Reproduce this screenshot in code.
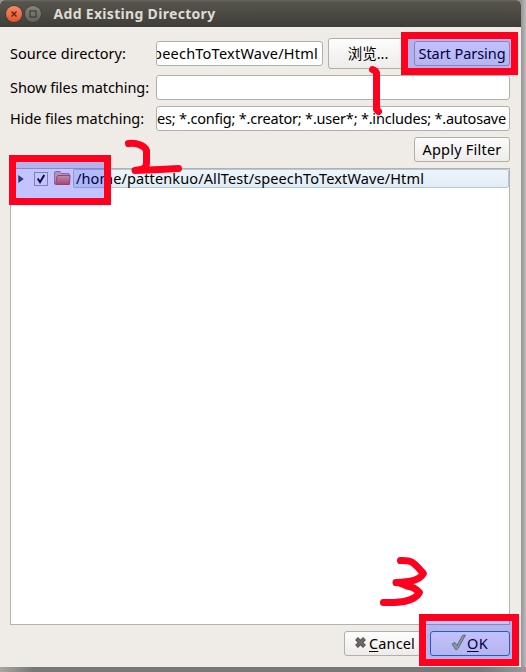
<script>
  // Spreads letters so that a label fills its measured width.
  function fit(node, width) {
    const n = node.textContent.length;
    node.style.letterSpacing = '0px';
    const natural = node.getBoundingClientRect().width;
    node.style.letterSpacing = (width - natural) / n + 'px';
  }
</script>

<div class="desktop">
  <div class="window">
    <header>
      <span class="ctl close"><svg width="16" height="16"><path d="M5.500 5.500l5 5m0-5l-5 5" stroke="#5b2412" stroke-width="1.3" /></svg></span>
      <span class="ctl max"><svg width="16" height="16"><rect x="5" y="5" width="6" height="6" fill="none" stroke="#403f3a" stroke-width="1.3" /></svg></span>
      <h1><span use:fit={162}>Add Existing Directory</span></h1>
    </header>

    <main>
      <div class="row first">
        <label for="src"><span use:fit={116}>Source directory:</span></label>
        <div class="field src" id="src"><span use:fit={165}>peechToTextWave/Html</span></div>
        <button class="browse"><span>浏览...</span></button>
        <button class="parse"><span use:fit={87}>Start Parsing</span></button>
      </div>
      <div class="row second">
        <label for="show"><span use:fit={139}>Show files matching:</span></label>
        <div class="field" id="show"></div>
      </div>
      <div class="row third">
        <label for="hide"><span use:fit={134}>Hide files matching:</span></label>
        <div class="field" id="hide"><span use:fit={349}>es; *.config; *.creator; *.user*; *.includes; *.autosave</span></div>
      </div>
      <div class="row apply"><button><span use:fit={79}>Apply Filter</span></button></div>

      <div class="tree">
        <div class="item">
          <svg class="arrow" width="6" height="8"><path d="M.3 0L5.700 4 .3 8z" fill="#444" /></svg>
          <svg class="check" width="14" height="14"><rect x=".5" y=".5" width="13" height="13" fill="#fff" stroke="#aaa7a2" /><path d="M3.700 6.500L6 10.200 10.300 3" fill="none" stroke="#111" stroke-width="2" /></svg>
          <svg class="folder" width="17" height="15">
            <path d="M.5 13V2Q.5 .5 2 .5H6l1.500 2H14q1.500 0 1.500 1.500v9z" fill="#e0c0b4" stroke="#b58878" />
            <path d="M4 4.500H16L15.500 13.500H1.800L2.600 7Q3 4.500 4 4.500z" fill="url(#fold)" stroke="#c25a40" />
            <defs><linearGradient id="fold" x2="0" y2="1"><stop stop-color="#f0b8a0" /><stop offset="1" stop-color="#e3583a" /></linearGradient></defs>
          </svg>
          <div class="path"><span use:fit={348}>/home/pattenkuo/AllTest/speechToTextWave/Html</span></div>
        </div>
      </div>

      <footer>
        <button class="cancel">
          <svg width="13" height="13"><path d="M2.500 2.500l8 8m0-8l-8 8" stroke="#4b4b49" stroke-width="4" /><path d="M2.800 2.800l7.400 7.400m0-7.400l-7.400 7.400" stroke="#6c6c6a" stroke-width="2.200" /></svg>
          <span use:fit={46}><u>C</u>ancel</span>
        </button>
        <button class="ok">
          <svg width="16" height="17"><path d="M1 10l3-1.500 2 3L11.500 1.500l3-.500L7 14.500l-2 1.500z" fill="#b4cb78" stroke="#788a52" stroke-linejoin="round" /></svg>
          <span use:fit={21}><u>O</u>K</span>
        </button>
      </footer>
    </main>
  </div>

  <svg class="marks" width="526" height="672" viewBox="0 0 526 672">
    <g fill="#00f" fill-opacity=".235">
      <rect x="408" y="39" width="103" height="29" />
      <rect x="16" y="162" width="88" height="36" />
      <rect x="426" y="621" width="86" height="38" />
    </g>
    <g fill="none" stroke="#ff001e" stroke-width="7" stroke-linecap="round" stroke-linejoin="round">
      <rect x="404.500" y="35.500" width="110" height="36" stroke-linejoin="miter" />
      <rect x="12.500" y="158.500" width="95" height="43" stroke-linejoin="miter" />
      <rect x="422.500" y="617.500" width="93" height="45" stroke-linejoin="miter" />
      <path d="M372.500 69.500Q376.500 71 376.500 74V109.500L378.500 111.500" />
      <path d="M128.500 143.500C136 142 145 146 146.500 150.500V163Q146.500 169 141 169.500L135 170.500L160 169.500L178.500 168.500" />
      <path d="M400.500 560.500C413 560 414 563 423.500 573.500C419 581 409 582 396 582.500C402 582.500 404 585.500 409 586.500C414 587 417 590 419.500 592.500C414 602 399 603 383.500 602.500" />
    </g>
  </svg>
</div>

<style>
  .desktop {
    position: relative;
    width: 526px;
    height: 672px;
    overflow: hidden;
    background: linear-gradient(90deg, #aaa69f, #777 34px, #777 480px, #999 526px) 0 667px / 526px 5px no-repeat, linear-gradient(90deg, #959595 521px, #bbb 526px);
    font: 14.5px/20px "Noto Sans", "Noto Sans CJK SC", sans-serif;
    color: #000;
  }
  .window {
    width: 521px;
    height: 667px;
    background: #efebe6;
    border-radius: 5px 5px 0 0;
    overflow: hidden;
  }
  header {
    height: 27px;
    display: flex;
    align-items: center;
    padding-left: 6px;
    box-sizing: border-box;
    background: linear-gradient(#6b6960 0, #56544c 2px, #3e3d38);
  }
  .ctl {
    width: 16px;
    height: 16px;
    border-radius: 50%;
    margin-right: 3px;
    box-shadow: 0 0 0 .5px #302e2a;
  }
  .ctl svg { display: block; }
  .close { background: linear-gradient(#f58a63, #e2542b); }
  .max { background: linear-gradient(#85837b, #62615b); }
  h1 {
    margin: 0 0 0 9.500px;
    font-size: 14px;
    font-weight: 700;
    color: #dfdbd2;
    white-space: nowrap;
  }
  main { padding: 11px 11px 0 10px; }
  .row { display: flex; align-items: center; }
  .first { height: 31px; }
  .second { margin-top: 6px; }
  .third { margin-top: 6px; }
  .apply { margin-top: 6px; justify-content: flex-end; }
  .apply button { width: 96px; }
  label { width: 146px; flex: none; white-space: nowrap; padding-bottom: 2px; box-sizing: border-box; }
  span { display: inline-block; white-space: nowrap; flex: none; }
  .field {
    flex: 1;
    min-width: 0;
    height: 25px;
    box-sizing: border-box;
    border: 1px solid #b2aeaa;
    border-radius: 3px;
    background: #fff;
    overflow: hidden;
    display: flex;
    justify-content: flex-end;
    align-items: center;
    padding: 0 3px 2px 0;
  }
  .src { flex: 0 0 167px; padding-right: 4px; }
  button {
    height: 25px;
    box-sizing: border-box;
    padding: 0 0 2px;
    border: 1px solid #b2aeaa;
    border-radius: 3px;
    background: linear-gradient(#fdfdfd, #eeecea);
    font: inherit;
    color: inherit;
    display: flex;
    align-items: center;
    justify-content: center;
  }
  .browse { width: 80px; height: 31px; margin: 0 6px 0 5px; }
  .parse { width: 96px; }
  .tree {
    height: 457px;
    box-sizing: border-box;
    margin-top: 6px;
    border: 1px solid #b5b2ae;
    background: #fff;
  }
  .item { height: 19px; display: flex; align-items: center; padding-left: 7px; }
  .arrow { margin-right: 10px; }
  .check { margin-right: 6px; }
  .folder { margin-right: 2px; }
  .path {
    flex: 1;
    height: 19px;
    box-sizing: border-box;
    border: 1px solid #b5c7d3;
    border-radius: 2px;
    background: linear-gradient(#edf6fb, #e0ecf4);
    padding-left: 2px;
    line-height: 16px;
  }
  footer { display: flex; justify-content: flex-end; margin-top: 6px; }
  .cancel { width: 81px; margin-right: 5px; justify-content: flex-start; padding-left: 9px; }
  .cancel svg { margin-right: 2px; }
  .ok { width: 80px; border-color: #2b7bb5; padding-right: 1px; }
  u { text-underline-offset: 2px; text-decoration-thickness: 1px; }
  .marks { position: absolute; left: 0; top: 0; pointer-events: none; }
</style>
